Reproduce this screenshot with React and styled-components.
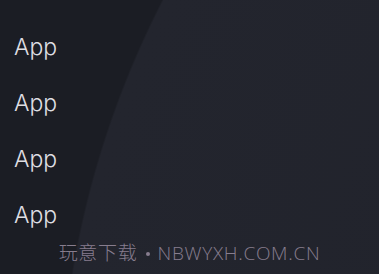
import React from 'react';
import styled, { createGlobalStyle } from 'styled-components';

const GlobalStyle = createGlobalStyle`
  html, body {
    margin: 0;
    padding: 0;
    background: #1b1d24;
  }
`;

const Screen = styled.div`
  position: relative;
  width: 379px;
  height: 274px;
  overflow: hidden;
  background:
    radial-gradient(circle 930px at 989px 425px, #1f2129 0, #23252e 99.8%, transparent 100%),
    #1b1d24;
`;

const AppList = styled.ul`
  list-style: none;
  margin: 0;
  padding: 19px 0 0 14px;
  display: flex;
  flex-direction: column;
`;

const AppItem = styled.li`
  font-family: Inter, "Open Sans", sans-serif;
  font-weight: 300;
  font-size: 23px;
  line-height: 56px;
  color: #dedee2;
`;

const Watermark = styled.div`
  position: absolute;
  left: 0;
  right: 0;
  bottom: 9px;
  display: flex;
  justify-content: center;
  align-items: center;
  gap: 5px;
  font-family: "Open Sans", "Noto Sans CJK SC", sans-serif;
  font-weight: 300;
  font-size: 19px;
  line-height: 24px;
  letter-spacing: 0.7px;
  color: #877d8e;
`;

const Dot = styled.span`
  width: 4px;
  height: 4px;
  margin: 2px 2px 0 4px;
  border-radius: 50%;
  background: #877d8e;
`;

const apps = ['App', 'App', 'App', 'App'];

export default function App() {
  return (
    <>
      <GlobalStyle />
      <Screen>
        <AppList>
          {apps.map((name, i) => (
            <AppItem key={i}>{name}</AppItem>
          ))}
        </AppList>
        <Watermark>
          <span>玩意下载</span>
          <Dot />
          <span>NBWYXH.COM.CN</span>
        </Watermark>
      </Screen>
    </>
  );
}
